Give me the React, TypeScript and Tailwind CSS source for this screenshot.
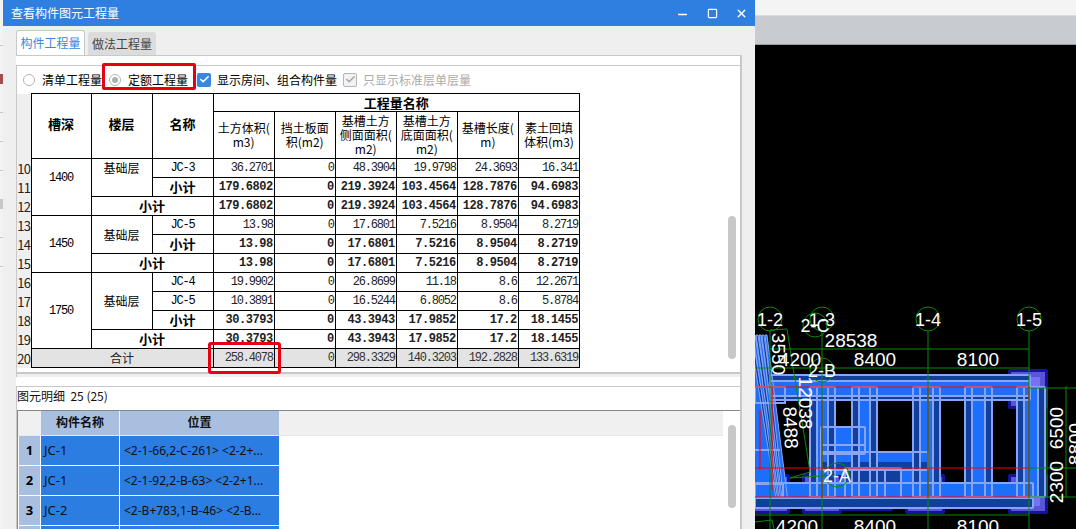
import { Check, Minus, Square, X } from 'lucide-react'

const cjk = "font-['Noto_Sans_CJK_SC','Noto_Sans',sans-serif]"
const num = "font-['Liberation_Mono','Noto_Sans_CJK_SC',monospace]"

type Row = { no: number; cells: string[]; name?: string; bold?: boolean }

const colWidths = [14, 60, 61, 61, 61, 61, 61, 61, 61, 61]

function NumCell({ value, bold, gray }: { value: string; bold?: boolean; gray?: boolean }) {
  return (
    <td className={`border border-black p-0 pr-px text-right whitespace-nowrap ${num} ${bold ? 'text-[12px] font-bold tracking-[-0.45px]' : 'text-[12px] tracking-[-1.2px]'} ${gray ? 'bg-[#e3e3e3] text-[#333]' : 'text-[#222]'}`}>
      {value}
    </td>
  )
}

function Gutter({ no }: { no: number }) {
  return <td className="bg-[#efefef] p-0 text-center text-[13px] leading-none tracking-[-0.6px] text-[#2a2015]">{no}</td>
}

function HeaderCell({ children }: { children: React.ReactNode }) {
  return <th className="border border-black p-0 text-center text-[12px] leading-[14px] font-normal">{children}</th>
}

function Nums({ row }: { row: Row }) {
  return (
    <>
      {row.cells.map((c, i) => (
        <NumCell key={i} value={c} bold={row.bold} />
      ))}
    </>
  )
}

function QuantityTable() {
  const r1: Row = { no: 10, cells: ['36.2701', '0', '48.3904', '19.9798', '24.3693', '16.341'] }
  const sub1 = ['179.6802', '0', '219.3924', '103.4564', '128.7876', '94.6983']
  const r13 = ['13.98', '0', '17.6801', '7.5216', '8.9504', '8.2719']
  const r16 = ['19.9902', '0', '26.8699', '11.18', '8.6', '12.2671']
  const r17 = ['10.3891', '0', '16.5244', '6.8052', '8.6', '5.8784']
  const sub3 = ['30.3793', '0', '43.3943', '17.9852', '17.2', '18.1455']
  const total = ['258.4078', '0', '298.3329', '140.3203', '192.2828', '133.6319']

  const nameCell = 'border border-black p-0 text-center text-[12px]'
  const codeCell = `border border-black p-0 text-center text-[12px] tracking-[-1.2px] ${num}`
  const subCell = 'border border-black p-0 text-center text-[13px] font-bold'

  return (
    <table className={`table-fixed border-collapse w-[563px] text-black ${cjk}`}>
      <colgroup>
        {colWidths.map((w, i) => (
          <col key={i} className={i === 0 ? 'w-[14px]' : i === 1 ? 'w-[60px]' : 'w-[61px]'} />
        ))}
      </colgroup>
      <thead>
        <tr className="h-[18px]">
          <th rowSpan={2} className="bg-[#efefef] p-0" />
          <th rowSpan={2} className="border border-black p-0 pb-[4px] text-[13px] font-bold">槽深</th>
          <th rowSpan={2} className="border border-black p-0 pb-[4px] text-[13px] font-bold">楼层</th>
          <th rowSpan={2} className="border border-black p-0 pb-[4px] text-[13px] font-bold">名称</th>
          <th colSpan={6} className="border border-black p-0 text-center text-[13px] leading-[16px] font-bold">工程量名称</th>
        </tr>
        <tr className="h-[47px]">
          <HeaderCell>土方体积(<br />m3)</HeaderCell>
          <HeaderCell>挡土板面<br />积(m2)</HeaderCell>
          <HeaderCell>基槽土方<br />侧面面积(<br />m2)</HeaderCell>
          <HeaderCell>基槽土方<br />底面面积(<br />m2)</HeaderCell>
          <HeaderCell>基槽长度(<br />m)</HeaderCell>
          <HeaderCell>素土回填<br />体积(m3)</HeaderCell>
        </tr>
      </thead>
      <tbody className="leading-[14px]">
        <tr className="h-[19px]">
          <Gutter no={10} />
          <td rowSpan={3} className={`${codeCell} pb-[19px]`}>1400</td>
          <td rowSpan={2} className={`${nameCell} pb-[19px]`}>基础层</td>
          <td className={codeCell}>JC-3</td>
          <Nums row={r1} />
        </tr>
        <tr className="h-[19px]">
          <Gutter no={11} />
          <td className={subCell}>小计</td>
          <Nums row={{ no: 11, cells: sub1, bold: true }} />
        </tr>
        <tr className="h-[19px]">
          <Gutter no={12} />
          <td colSpan={2} className={subCell}>小计</td>
          <Nums row={{ no: 12, cells: sub1, bold: true }} />
        </tr>

        <tr className="h-[19px]">
          <Gutter no={13} />
          <td rowSpan={3} className={codeCell}>1450</td>
          <td rowSpan={2} className={nameCell}>基础层</td>
          <td className={codeCell}>JC-5</td>
          <Nums row={{ no: 13, cells: r13 }} />
        </tr>
        <tr className="h-[19px]">
          <Gutter no={14} />
          <td className={subCell}>小计</td>
          <Nums row={{ no: 14, cells: r13, bold: true }} />
        </tr>
        <tr className="h-[19px]">
          <Gutter no={15} />
          <td colSpan={2} className={subCell}>小计</td>
          <Nums row={{ no: 15, cells: r13, bold: true }} />
        </tr>

        <tr className="h-[19px]">
          <Gutter no={16} />
          <td rowSpan={4} className={codeCell}>1750</td>
          <td rowSpan={3} className={nameCell}>基础层</td>
          <td className={codeCell}>JC-4</td>
          <Nums row={{ no: 16, cells: r16 }} />
        </tr>
        <tr className="h-[19px]">
          <Gutter no={17} />
          <td className={codeCell}>JC-5</td>
          <Nums row={{ no: 17, cells: r17 }} />
        </tr>
        <tr className="h-[19px]">
          <Gutter no={18} />
          <td className={subCell}>小计</td>
          <Nums row={{ no: 18, cells: sub3, bold: true }} />
        </tr>
        <tr className="h-[19px]">
          <Gutter no={19} />
          <td colSpan={2} className={subCell}>小计</td>
          <Nums row={{ no: 19, cells: sub3, bold: true }} />
        </tr>

        <tr className="h-[19px]">
          <Gutter no={20} />
          <td colSpan={3} className={`${nameCell} bg-[#e3e3e3] text-[#222]`}>合计</td>
          {total.map((c, i) => (
            <NumCell key={i} value={c} gray />
          ))}
        </tr>
      </tbody>
    </table>
  )
}

function Toolbar() {
  return (
    <div className="flex h-[27px] items-center pl-[6px] text-[12px] text-black">
      <span className="size-[12px] rounded-full border border-[#b5b5b5] bg-white" />
      <span className="ml-[7px] w-[60px] whitespace-nowrap">清单工程量</span>
      <span className="ml-[7px] flex size-[12px] items-center justify-center rounded-full border border-[#b5b5b5]">
        <span className="size-[6px] rounded-full bg-[#b0b0b0]" />
      </span>
      <span className="ml-[7px] w-[60px] whitespace-nowrap">定额工程量</span>
      <span className="ml-[9px] flex size-[14px] items-center justify-center rounded-[2px] bg-[#3a87e0]">
        <Check className="size-[11px] text-white" strokeWidth={3.5} />
      </span>
      <span className="ml-[6px] w-[120px] whitespace-nowrap">显示房间、组合构件量</span>
      <span className="ml-[6px] flex size-[14px] items-center justify-center rounded-[2px] border border-[#b5b5b5] bg-[#f2f2f2]">
        <Check className="size-[11px] text-[#a0a0a0]" strokeWidth={3} />
      </span>
      <span className="ml-[6px] whitespace-nowrap text-[#ababab]">只显示标准层单层量</span>
    </div>
  )
}

const detailRows = [
  { no: 1, name: 'JC-1', pos: '<2-1-66,2-C-261> <2-2+...' },
  { no: 2, name: 'JC-1', pos: '<2-1-92,2-B-63> <2-2+1...' },
  { no: 3, name: 'JC-2', pos: '<2-B+783,1-B-46> <2-B...' },
  { no: 4, name: '', pos: '' },
]

function DetailGrid() {
  return (
    <div className="relative flex-1 overflow-hidden border-t border-l border-[#888] bg-white text-[12px] text-[#111] font-['Noto_Sans','Noto_Sans_CJK_SC',sans-serif]">
      <div className="flex h-[25px] w-[705px] border-b border-[#e8e8e8] bg-[#f0f0f0]">
        <div className="w-[23px]" />
        <div className="flex w-[78px] items-center justify-center bg-[#a9bfe0] font-bold">构件名称</div>
        <div className="ml-px flex w-[159px] items-center justify-center bg-[#a9bfe0] font-bold">位置</div>
      </div>
      <div className="flex flex-col gap-px">
        {detailRows.map((r) => (
          <div key={r.no} className="flex h-[29px]">
            <div className="ml-px flex w-[21px] items-center justify-center bg-[#a9bfe0] text-[13px] font-bold text-black">{r.no === 4 ? '' : r.no}</div>
            <div className="ml-px flex w-[78px] items-center bg-[#2b7de1] pl-[3px] text-[13px]">{r.name}</div>
            <div className="ml-px flex w-[159px] items-center overflow-hidden bg-[#2b7de1] pl-[4px] whitespace-nowrap">{r.pos}</div>
          </div>
        ))}
      </div>
      <div className="absolute top-[14px] left-[710px] h-[83px] w-[8px] rounded-full bg-[#c8c8c8]" />
    </div>
  )
}

function Dialog() {
  return (
    <div className={`relative flex h-full w-[752px] shrink-0 flex-col bg-[#efefef] ${cjk}`}>
      <div className="flex h-[26px] shrink-0 items-center bg-[#2e7fe0] pl-[8px] text-[12px] text-white">
        <span className="flex-1">查看构件图元工程量</span>
        <Minus className="mt-[3px] size-[13px]" strokeWidth={3} />
        <Square className="ml-[18px] size-[11px]" strokeWidth={2.5} />
        <X className="mr-[7px] ml-[17px] size-[13px]" strokeWidth={2.5} />
      </div>

      <div className="flex h-[29px] shrink-0 items-end pl-[13px] text-[12px]">
        <div className="flex h-[25px] w-[69px] items-center justify-center rounded-t-[3px] border border-b-0 border-[#c8c8c8] bg-white text-[#3a87e0]">构件工程量</div>
        <div className="ml-[3px] flex h-[23px] w-[68px] items-center justify-center rounded-t-[3px] bg-[#dcdcdc] text-[#444]">做法工程量</div>
      </div>

      <div className="ml-[13px] flex w-[726px] flex-1 flex-col overflow-hidden border-t border-r-2 border-[#c8c8c8] bg-white">
        <div className="h-[9px] shrink-0" />
        <div className="relative h-[312px] shrink-0 border-t border-l border-[#c8c8c8]">
          <Toolbar />
          <QuantityTable />
          <div className="absolute top-[150px] left-[711px] h-[143px] w-[8px] rounded-full bg-[#c8c8c8]" />
          <div className="absolute inset-x-0 bottom-0 h-[5px] border-t-2 border-[#c8c8c8] bg-[#efefef]" />
        </div>
        <div className="h-[9px] shrink-0" />
        <div className="flex flex-1 flex-col border-t border-l border-[#c8c8c8]">
          <div className="flex h-[23px] shrink-0 items-center pb-[5px] text-[12px] text-[#111] whitespace-pre">图元明细  25 (25)</div>
          <DetailGrid />
        </div>
      </div>

      {/* red marker boxes drawn on top of the screenshot */}
      <div className="absolute top-[63px] left-[99px] h-[27px] w-[94px] rounded-[2px] border-[3px] border-[#e60012]" />
      <div className="absolute top-[342px] left-[205px] h-[32px] w-[73px] rounded-[3px] border-[3px] border-[#e60012]" />
    </div>
  )
}

const LINE = '#86a5f5'
const DARK = '#123f9e'
const BRIGHT = '#1d6ffb'
const GREEN = '#0a8a0a'

const beams = [
  { x: 810, w: 25 },
  { x: 852, w: 25 },
  { x: 913, w: 27 },
  { x: 965, w: 27 },
  { x: 1017, w: 28 },
]

function VBeam({ x, y, h, w = 27 }: { x: number; y: number; h: number; w?: number }) {
  const e = 7
  return (
    <g>
      <rect x={x} y={y} width={w} height={h} fill={DARK} />
      <rect x={x + e} y={y} width={w - 2 * e} height={h} fill={BRIGHT} />
    </g>
  )
}

function VOutline({ x, y, h, w = 27 }: { x: number; y: number; h: number; w?: number }) {
  const e = 7
  return (
    <g fill="none" stroke={LINE} strokeWidth={2}>
      <rect x={x} y={y} width={w} height={h} rx={1} />
      <line x1={x + e} x2={x + e} y1={y} y2={y + h} />
      <line x1={x + w - e} x2={x + w - e} y1={y} y2={y + h} />
    </g>
  )
}

function Footing({ x, y, s = 40, w = s }: { x: number; y: number; s?: number; w?: number }) {
  return (
    <g>
      <rect x={x} y={y} width={w} height={s} rx={2} fill="#14149a" />
      <rect x={x + 3} y={y + 3} width={w - 6} height={s - 6} fill="#5a55d8" />
      <rect x={x + 8} y={y + 8} width={w - 16} height={s - 16} fill="#7a70f5" />
    </g>
  )
}

function Axis({ x, y, label }: { x: number; y: number; label: string }) {
  return (
    <g>
      <circle cx={x} cy={y} r={12} fill="none" stroke={GREEN} strokeWidth={1} />
      <text x={x} y={y + 7} textAnchor="middle" fontSize={18} fill="white">{label}</text>
    </g>
  )
}

function Dim({ x, y, label, rotate, size = 18 }: { x: number; y: number; label: string; rotate?: number; size?: number }) {
  return (
    <text x={x} y={y} fontSize={size} fill="white" textAnchor="middle" transform={rotate ? `rotate(${rotate} ${x} ${y})` : undefined}>
      {label}
    </text>
  )
}

function CadView() {
  const diag = [0, 1, 2, 3, 4, 5]
  return (
    <svg viewBox="755 45 321 484" className="block h-[484px] w-[321px] bg-black font-['Liberation_Sans',sans-serif]">
      <Footing x={1008} y={369} />
      <Footing x={1008} y={474} />
      <Footing x={905} y={474} />
      <Footing x={836} y={453} s={58} w={57} />
      <Footing x={802} y={474} />
      <Footing x={750} y={474} />

      {beams.map((b) => (
        <VBeam key={b.x} x={b.x} y={387} h={110} w={b.w} />
      ))}

      {/* infill between the first two beams */}
      <rect x={835} y={427} width={17} height={48} fill={BRIGHT} />
      <rect x={877} y={452} width={36} height={30} fill={BRIGHT} />
      <rect x={821} y={462} width={107} height={8} fill={DARK} />
      <rect x={845} y={468} width={56} height={30} fill={DARK} />

      {/* top band */}
      <rect x={770} y={375} width={260} height={25} fill={BRIGHT} />
      <rect x={770} y={375} width={260} height={6} fill={DARK} />
      <rect x={770} y={396} width={260} height={4} fill={DARK} />
      {/* bottom band */}
      <rect x={755} y={483} width={278} height={25} fill={BRIGHT} />
      <rect x={755} y={498} width={278} height={10} fill={DARK} />

      {/* slanted member on the left */}
      <polygon points="755,335 762,335 787,498 755,498" fill={BRIGHT} />
      {diag.map((i) => (
        <polygon
          key={i}
          points={`${750 + i * 3},335 ${752 + i * 3},335 ${780 + i * 1.5},498 ${776 + i * 1.5},498`}
          fill={i % 2 === 0 ? DARK : BRIGHT}
          stroke={LINE}
          strokeWidth={1}
        />
      ))}
      <g fill="none" stroke={LINE} strokeWidth={2}>
        <rect x={770} y={375} width={260} height={25} rx={1} />
        <line x1={770} x2={1030} y1={381} y2={381} />
        <line x1={770} x2={1030} y1={396} y2={396} />
        <rect x={755} y={483} width={278} height={25} rx={1} />
        <line x1={755} x2={1033} y1={498} y2={498} />
        <rect x={821} y={427} width={44} height={27} rx={1} />
        <line x1={821} x2={865} y1={445} y2={445} />
        <rect x={821} y={452} width={107} height={18} rx={1} />
        <rect x={845} y={468} width={56} height={30} rx={1} />
        <line x1={870} x2={870} y1={468} y2={498} />
        <line x1={885} x2={885} y1={468} y2={498} />
        <rect x={755} y={387} width={30} height={16} />
        <rect x={755} y={484} width={28} height={14} />
        <line x1={755} x2={780} y1={450} y2={450} />
      </g>
      {beams.map((b) => (
        <VOutline key={b.x} x={b.x} y={387} h={110} w={b.w} />
      ))}

      <g stroke="#ff0000" strokeWidth={1.2}>
        <line x1={755} x2={1029} y1={387} y2={387} />
        <line x1={755} x2={1029} y1={468} y2={468} />
        <line x1={755} x2={1029} y1={497} y2={497} />
        <line x1={1029} x2={1029} y1={387} y2={497} />
        <line x1={928} x2={928} y1={387} y2={497} />
        <line x1={822} x2={822} y1={400} y2={497} />
        <line x1={772} x2={772} y1={387} y2={490} />
        <line x1={760} x2={760} y1={410} y2={470} />
      </g>

      <g stroke={GREEN} strokeWidth={1} fill="none">
        <line x1={770} x2={770} y1={331} y2={529} />
        <line x1={822} x2={822} y1={331} y2={529} />
        <line x1={928} x2={928} y1={331} y2={529} />
        <line x1={1029} x2={1029} y1={331} y2={529} />
        <line x1={770} x2={1029} y1={349} y2={349} />
        <line x1={755} x2={1029} y1={368} y2={368} />
        <line x1={755} x2={1029} y1={515} y2={515} />
        <line x1={1047} x2={1047} y1={388} y2={497} />
        <line x1={1066} x2={1066} y1={386} y2={497} />
        <line x1={1029} x2={1076} y1={388} y2={388} />
        <line x1={1029} x2={1076} y1={468} y2={468} />
        <line x1={1029} x2={1076} y1={497} y2={497} />
        <polyline points="770,330 787,329 793,368 805,440 810,472 790,478" />
        <polyline points="790,478 835,475" />
        <polyline points="755,522 772,520 774,529" />
      </g>

      <Axis x={770} y={319} label="1-2" />
      <Axis x={822} y={319} label="1-3" />
      <Axis x={928} y={319} label="1-4" />
      <Axis x={1029} y={319} label="1-5" />
      <Axis x={815} y={325} label="2-C" />
      <Axis x={822} y={370} label="2-B" />
      <Axis x={837} y={475} label="2-A" />

      <Dim x={851} y={347} label="28538" size={19} />
      <Dim x={800} y={366} label="4200" size={19} />
      <Dim x={875} y={366} label="8400" size={19} />
      <Dim x={978} y={366} label="8100" size={19} />
      <Dim x={797} y={533} label="4200" size={19} />
      <Dim x={875} y={533} label="8400" size={19} />
      <Dim x={978} y={533} label="8100" size={19} />
      <Dim x={772} y={354} label="3550" rotate={90} size={19} />
      <Dim x={799} y={403} label="12038" rotate={90} size={19} />
      <Dim x={784} y={428} label="8488" rotate={87} size={19} />
      <Dim x={1063} y={428} label="6500" rotate={-90} size={19} />
      <Dim x={1063} y={482} label="2300" rotate={-90} size={19} />
      <Dim x={1082} y={444} label="8800" rotate={-90} size={19} />
    </svg>
  )
}

export default function App() {
  return (
    <div className="flex h-[529px] w-[1076px] overflow-hidden bg-white">
      <div className="flex w-[3px] shrink-0 flex-col gap-[28px] bg-[#f3f3f3] pt-[45px]">
        <div className="h-px bg-[#c8c8c8]" />
        <div className="h-[10px] bg-[#a05050]" />
        <div className="h-px bg-[#c8c8c8]" />
        <div className="h-px bg-[#c8c8c8]" />
        <div className="h-px bg-[#c8c8c8]" />
        <div className="h-[10px] bg-[#c8c8c8]" />
        <div className="h-px bg-[#c8c8c8]" />
        <div className="h-px bg-[#c8c8c8]" />
      </div>
      <Dialog />
      <div className="flex flex-1 flex-col bg-black">
        <div className="h-[15px] shrink-0 bg-[#f4f4f4]" />
        <div className="h-[30px] shrink-0 border-t border-b border-t-[#dcdcdc] border-b-[#9a9da3] bg-[#c8cbd0]" />
        <CadView />
      </div>
    </div>
  )
}
